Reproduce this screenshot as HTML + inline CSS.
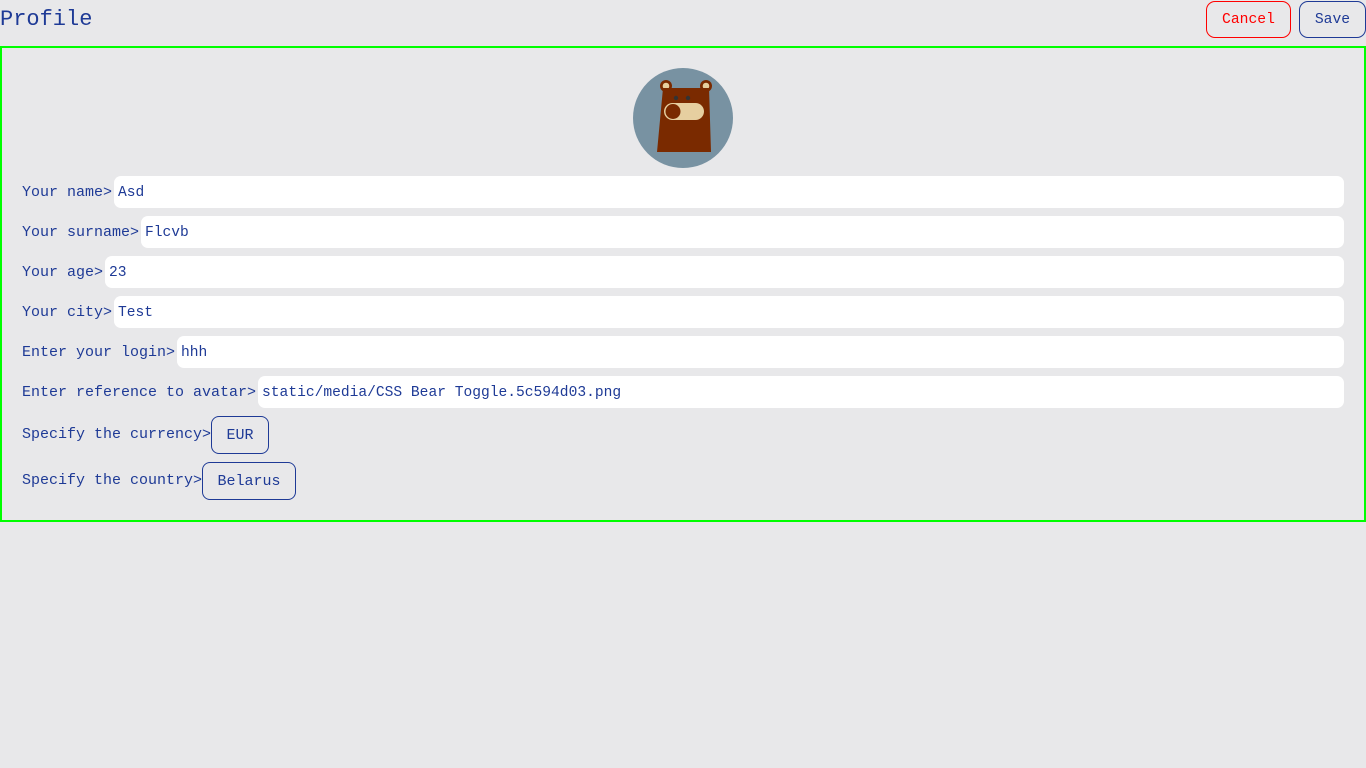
<!DOCTYPE html>
<html><head><meta charset="utf-8"><style>
*{box-sizing:border-box;margin:0;padding:0}
body{width:1366px;height:768px;background:#e8e8ea;font-family:"Liberation Mono",monospace;color:#1e3a96;position:relative;overflow:hidden}
.t{position:absolute;left:0;top:6px;font-size:22px;line-height:28px}
.btn{position:absolute;border:1px solid;border-radius:9px;background:transparent;font-family:inherit;font-size:14.7px;display:flex;align-items:center;justify-content:center}
.box{position:absolute;left:0;top:46px;width:1366px;height:476px;border:2px solid #00ff00}
.av{position:absolute;left:633px;top:68px;width:100px;height:100px;border-radius:50%;background:#7892a2;overflow:hidden}
.row{position:absolute;left:22px;right:22px;height:32px;display:flex;align-items:center;font-size:15px}
.row .in{flex:1;height:32px;background:#fff;border-radius:7px;margin-left:2px;padding-left:4px;line-height:34px;font-size:14.6px}
.sel{position:absolute;border:1px solid #1e3a96;border-radius:8px;font-size:15px;display:flex;align-items:center;justify-content:center}
.lab{position:absolute;left:22px;font-size:15px}
</style></head><body>
<div class="t">Profile</div>
<div class="btn" style="left:1206px;top:1px;width:85px;height:37px;color:#f00;border-color:#f00">Cancel</div>
<div class="btn" style="left:1299px;top:1px;width:67px;height:37px;color:#1e3a96;border-color:#1e3a96">Save</div>
<div class="box"></div>
<div class="av"><svg width="100" height="100" viewBox="0 0 100 100">
<circle cx="33" cy="18" r="6" fill="#7a2a00"/><circle cx="33" cy="18" r="3.3" fill="#e6cfa0"/>
<circle cx="73" cy="18" r="6" fill="#7a2a00"/><circle cx="73" cy="18" r="3.3" fill="#e6cfa0"/>
<path d="M30 20 H76 L78 84 H24 Z" fill="#7a2a00"/>
<circle cx="43" cy="30" r="2.2" fill="#333"/><circle cx="55" cy="30" r="2.2" fill="#333"/>
<rect x="31" y="35" width="40" height="17" rx="8.5" fill="#e6cfa0"/>
<circle cx="40" cy="43.5" r="7.5" fill="#7a2a00"/>
</svg></div>
<div class="row" style="top:176px">Your name&gt;<div class="in">Asd</div></div>
<div class="row" style="top:216px">Your surname&gt;<div class="in">Flcvb</div></div>
<div class="row" style="top:256px">Your age&gt;<div class="in">23</div></div>
<div class="row" style="top:296px">Your city&gt;<div class="in">Test</div></div>
<div class="row" style="top:336px">Enter your login&gt;<div class="in">hhh</div></div>
<div class="row" style="top:376px">Enter reference to avatar&gt;<div class="in">static/media/CSS Bear Toggle.5c594d03.png</div></div>
<div class="lab" style="top:426px">Specify the currency&gt;</div>
<div class="sel" style="left:211px;top:416px;width:58px;height:38px">EUR</div>
<div class="lab" style="top:472px">Specify the country&gt;</div>
<div class="sel" style="left:202px;top:462px;width:94px;height:38px">Belarus</div>
</body></html>
